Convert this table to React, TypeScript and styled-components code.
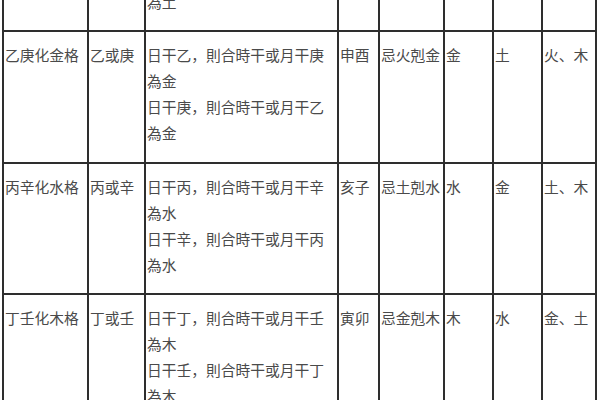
import React from 'react'
import styled, { createGlobalStyle } from 'styled-components'

interface RowData {
  name: string
  stems: string
  rules: string[]
  branches: string
  taboo: string
  element: string
  helper: string
  avoid: string
}

const rows: RowData[] = [
  {
    name: '甲己化土格',
    stems: '甲或己',
    rules: ['日干甲，則合時干或月干己為土', '日干己，則合時干或月干甲為土'],
    branches: '辰戌丑未',
    taboo: '忌木剋土',
    element: '土',
    helper: '火',
    avoid: '木、水',
  },
  {
    name: '乙庚化金格',
    stems: '乙或庚',
    rules: ['日干乙，則合時干或月干庚為金', '日干庚，則合時干或月干乙為金'],
    branches: '申酉',
    taboo: '忌火剋金',
    element: '金',
    helper: '土',
    avoid: '火、木',
  },
  {
    name: '丙辛化水格',
    stems: '丙或辛',
    rules: ['日干丙，則合時干或月干辛為水', '日干辛，則合時干或月干丙為水'],
    branches: '亥子',
    taboo: '忌土剋水',
    element: '水',
    helper: '金',
    avoid: '土、木',
  },
  {
    name: '丁壬化木格',
    stems: '丁或壬',
    rules: ['日干丁，則合時干或月干壬為木', '日干壬，則合時干或月干丁為木'],
    branches: '寅卯',
    taboo: '忌金剋木',
    element: '木',
    helper: '水',
    avoid: '金、土',
  },
]

const columns = [85, 57, 193, 41, 65, 49, 49, 54]

const GlobalStyle = createGlobalStyle`
  html, body {
    margin: 0;
    padding: 0;
    background: #ffffff;
  }
`

const Page = styled.div`
  width: 600px;
  height: 400px;
  overflow: hidden;
  background: #ffffff;
`

const Table = styled.table`
  table-layout: fixed;
  border-collapse: collapse;
  width: 595px;
  margin: -101.5px 0 0 2px;
  font-family: 'Noto Sans CJK SC', 'Noto Sans CJK TC', sans-serif;
  font-size: 14.75px;
  line-height: 26px;
  color: #4a4a4a;
`

const Cell = styled.td`
  border: 2px solid #2e2e2e;
  padding: 10px 1px 15.5px;
  vertical-align: top;
  overflow: hidden;
  white-space: nowrap;
`

const RuleCell = styled(Cell)`
  white-space: normal;
`

const Rule = styled.div`
  width: 186px;
`

const App: React.FC = () => {
  return (
    <Page>
      <GlobalStyle />
      <Table>
        <colgroup>
          {columns.map((w, i) => (
            <col key={i} style={{ width: w }} />
          ))}
        </colgroup>
        <tbody>
          {rows.map((row) => (
            <tr key={row.name}>
              <Cell>{row.name}</Cell>
              <Cell>{row.stems}</Cell>
              <RuleCell>
                {row.rules.map((rule) => (
                  <Rule key={rule}>{rule}</Rule>
                ))}
              </RuleCell>
              <Cell>{row.branches}</Cell>
              <Cell>{row.taboo}</Cell>
              <Cell>{row.element}</Cell>
              <Cell>{row.helper}</Cell>
              <Cell>{row.avoid}</Cell>
            </tr>
          ))}
        </tbody>
      </Table>
    </Page>
  )
}

export default App
